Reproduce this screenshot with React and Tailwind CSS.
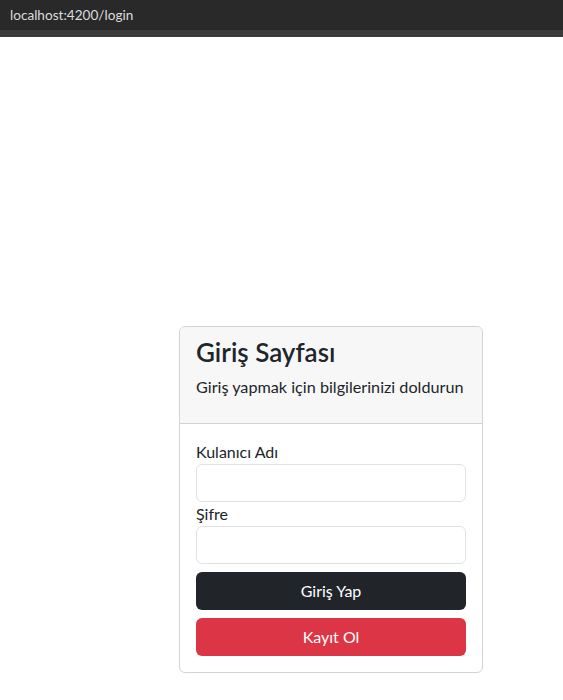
import React from 'react';

const App = () => {
    return (
        <div className="min-h-[700px] bg-white text-[#212529]" style={{ fontFamily: 'Lato, "Open Sans", sans-serif' }}>
            <div className="h-[30px] bg-[#292929] flex items-center pl-[10px]">
                <span className="text-[13.6px] text-[#dcdcdc]">localhost:4200/login</span>
            </div>
            <div className="h-[7px] bg-[#3b3b3b]"></div>

            <div className="ml-[179px] mt-[289px] w-[304px] border border-[#d3d3d3] rounded-[6px] overflow-hidden">
                <div className="bg-[#f7f7f7] border-b border-[#d3d3d3] px-4 pt-[11px] pb-2">
                    <h3 className="text-[26px] leading-[29px] font-semibold mb-2">Giriş Sayfası</h3>
                    <p className="text-[16.2px] leading-6 mb-4 whitespace-nowrap">Giriş yapmak için bilgilerinizi doldurun</p>
                </div>
                <div className="px-4 pt-4 pb-4">
                    <label className="block text-[16px] leading-6">Kulanıcı Adı</label>
                    <input type="text" className="block w-full h-[38px] border border-[#dee2e6] rounded-[6px] px-3 outline-none" />
                    <label className="block text-[16px] leading-6">Şifre</label>
                    <input type="password" className="block w-full h-[38px] border border-[#dee2e6] rounded-[6px] px-3 outline-none" />
                    <button className="mt-2 w-full h-[38px] rounded-[6px] bg-[#212529] text-white text-[16px]">Giriş Yap</button>
                    <button className="mt-2 w-full h-[38px] rounded-[6px] bg-[#dc3545] text-white text-[16px]">Kayıt Ol</button>
                </div>
            </div>
        </div>
    );
};

export default App;
